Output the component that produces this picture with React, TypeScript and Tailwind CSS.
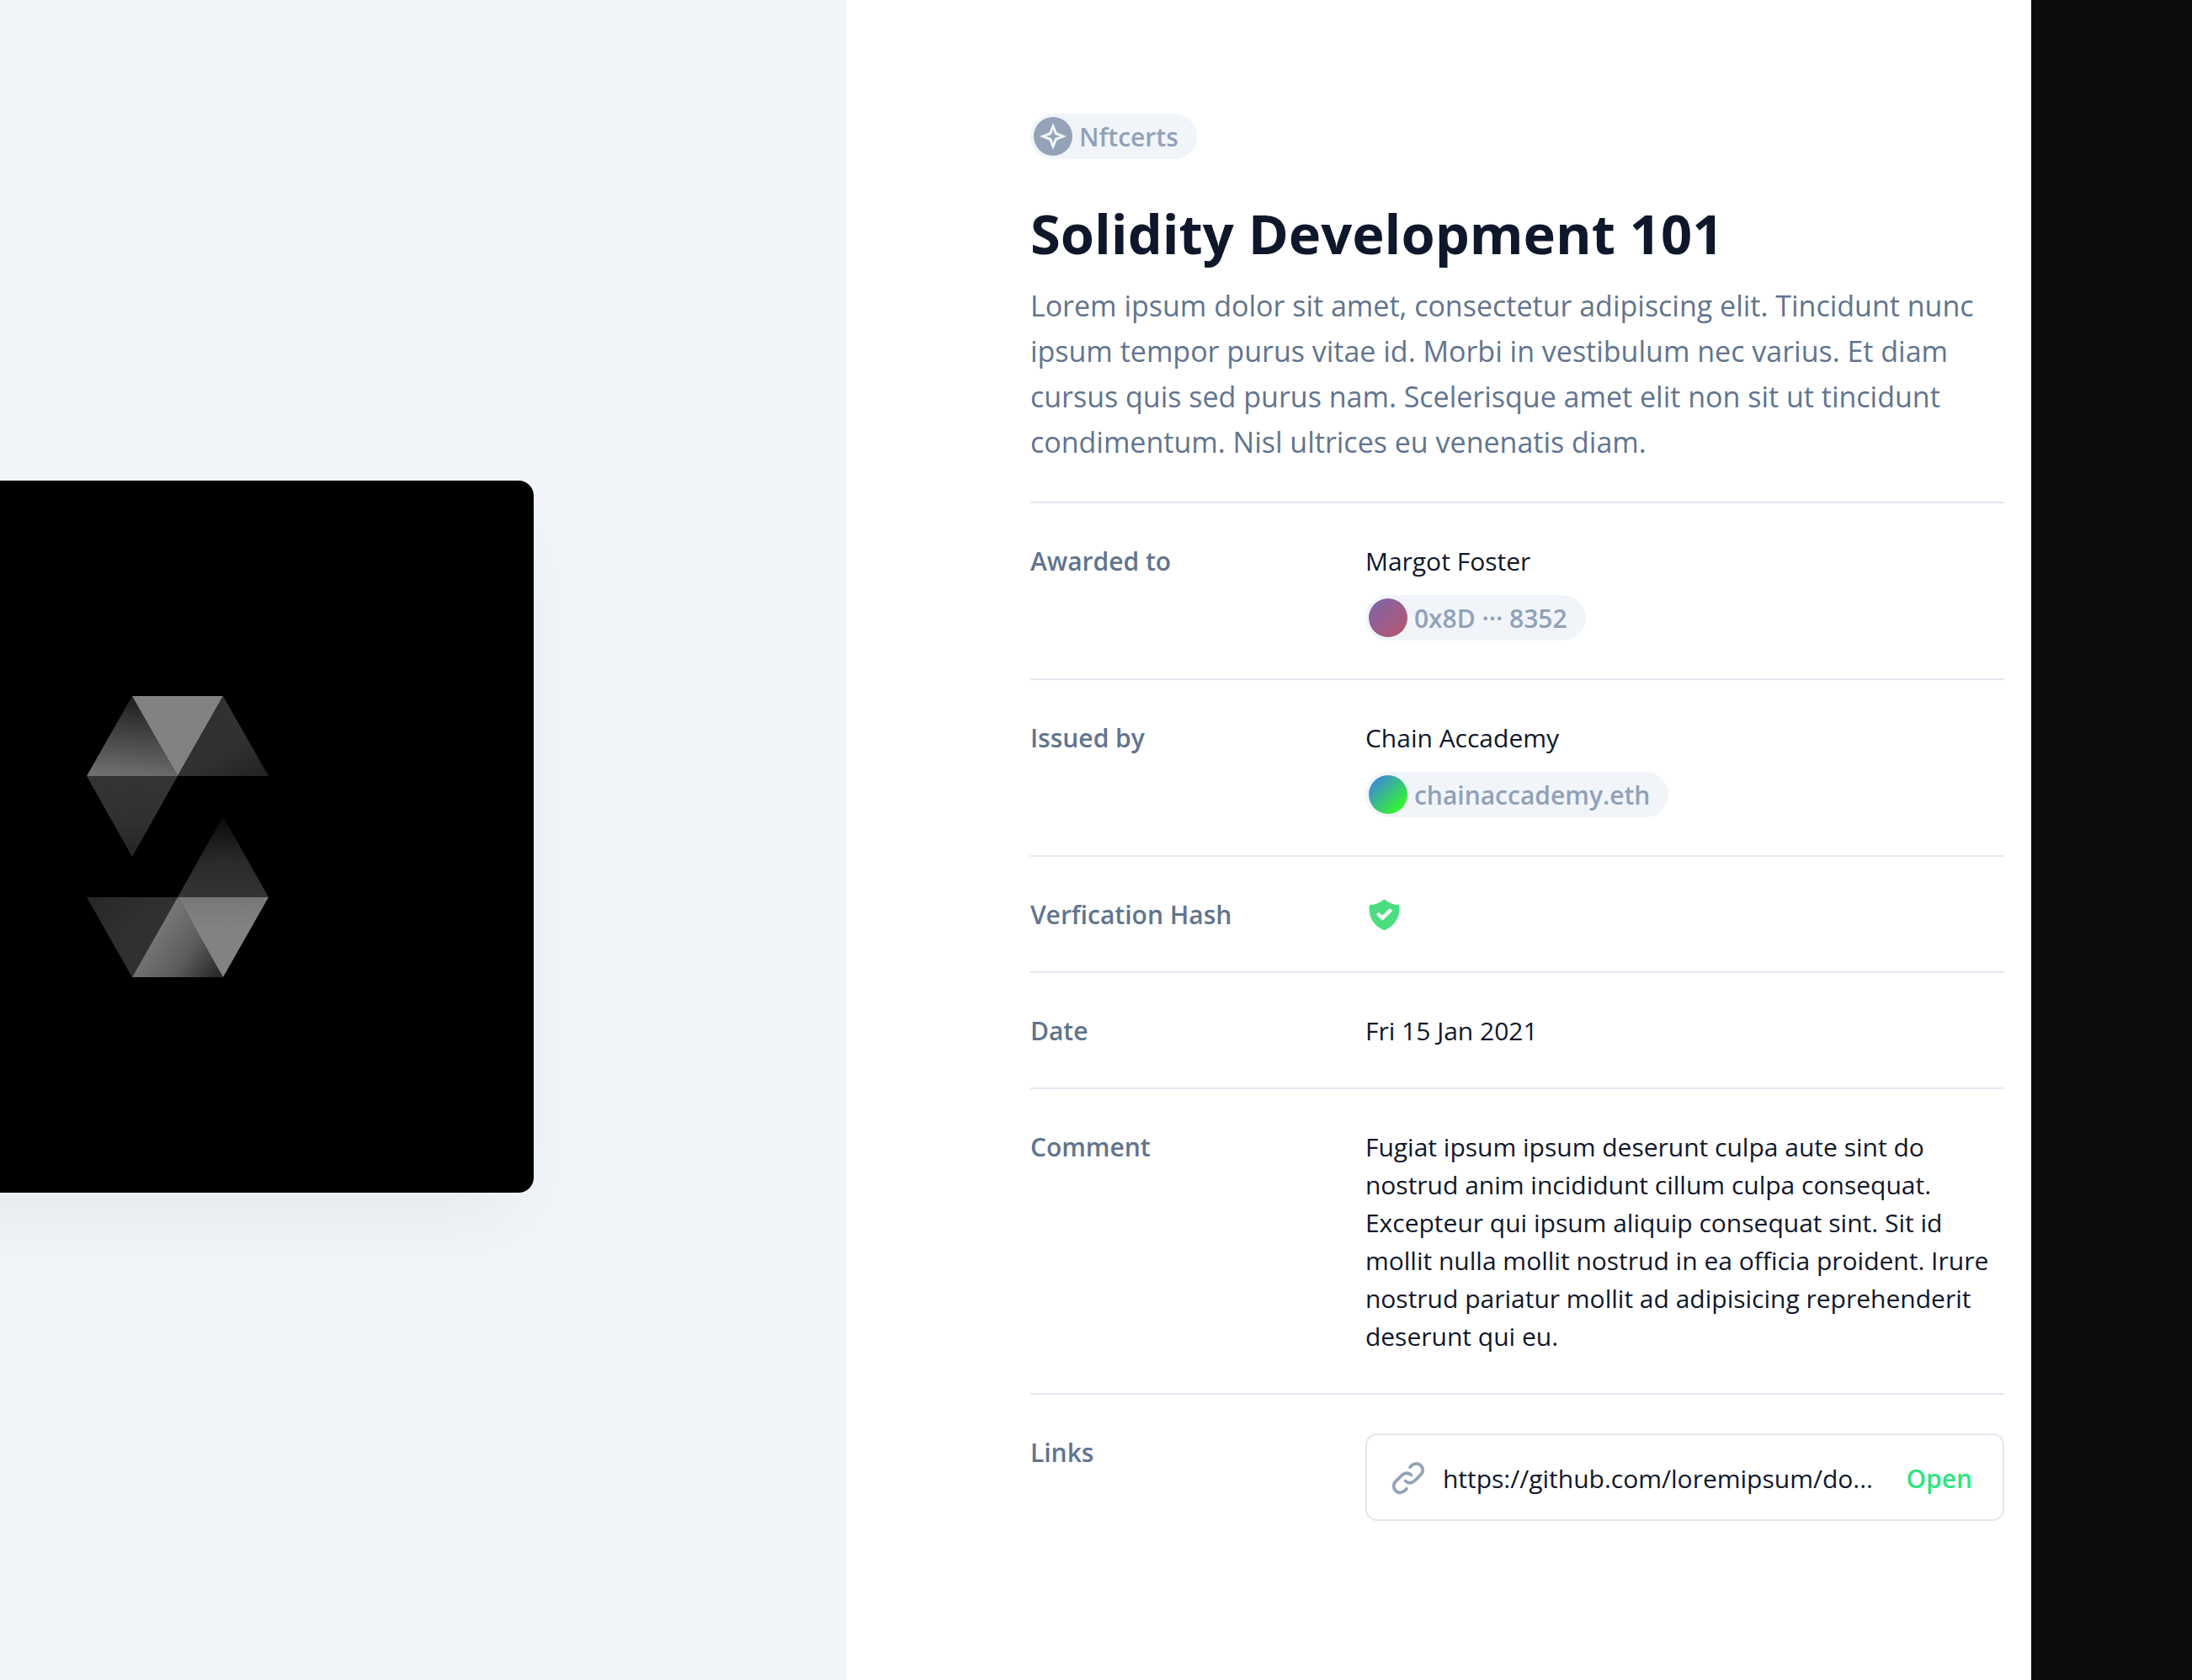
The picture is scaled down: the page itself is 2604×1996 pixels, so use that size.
import type { ReactNode } from "react";

function SolidityLogo() {
  return (
    <svg viewBox="0 0 216 334" className="w-[216px]" aria-label="Solidity" role="img">
      <defs>
        <linearGradient id="a" x1="0.5" y1="0" x2="0.4" y2="1">
          <stop offset="0" stopColor="#1c1c1c" />
          <stop offset="1" stopColor="#6f6f6f" />
        </linearGradient>
        <linearGradient id="b" x1="0.2" y1="0" x2="0.9" y2="1">
          <stop offset="0.6" stopColor="#313131" />
          <stop offset="1" stopColor="#232323" />
        </linearGradient>
        <linearGradient id="c" x1="0.5" y1="0" x2="0.5" y2="1">
          <stop offset="0" stopColor="#343434" />
          <stop offset="0.6" stopColor="#303030" />
          <stop offset="1" stopColor="#242424" />
        </linearGradient>
        <linearGradient id="d" x1="0.5" y1="0" x2="0.5" y2="1">
          <stop offset="0" stopColor="#080808" />
          <stop offset="0.55" stopColor="#2a2a2a" />
          <stop offset="1" stopColor="#343434" />
        </linearGradient>
        <linearGradient id="e" x1="0" y1="0" x2="0.5" y2="0.4">
          <stop offset="0" stopColor="#272727" />
          <stop offset="1" stopColor="#303030" />
        </linearGradient>
        <linearGradient id="f" x1="0.25" y1="0.5" x2="0.95" y2="0.95">
          <stop offset="0" stopColor="#757575" />
          <stop offset="0.5" stopColor="#5c5c5c" />
          <stop offset="1" stopColor="#292929" />
        </linearGradient>
        <linearGradient id="g" x1="0.5" y1="0" x2="0.5" y2="1">
          <stop offset="0" stopColor="#787878" />
          <stop offset="0.4" stopColor="#828282" />
          <stop offset="1" stopColor="#828282" />
        </linearGradient>
      </defs>
      <path d="M54 0L108 95H0Z" fill="url(#a)" />
      <path d="M54 0H162L108 95Z" fill="#828282" />
      <path d="M162 0L216 95H108Z" fill="url(#b)" />
      <path d="M0 95H108L54 191Z" fill="url(#c)" />
      <path d="M162 143L216 239H108Z" fill="url(#d)" />
      <path d="M0 239H108L54 334Z" fill="url(#e)" />
      <path d="M108 239L162 334H54Z" fill="url(#f)" />
      <path d="M108 239H216L162 334Z" fill="url(#g)" />
    </svg>
  );
}

function Pill({ icon, children }: { icon: ReactNode; children: ReactNode }) {
  return (
    <span className="flex h-[54px] w-fit items-center gap-2 rounded-full bg-slate-100 pr-[22px] pl-1 text-[30px] leading-[45px] font-semibold text-slate-400">
      {icon}
      <span className="pt-px">{children}</span>
    </span>
  );
}

function Row({ label, children }: { label: string; children: ReactNode }) {
  return (
    <div className="flex border-t-2 border-slate-200 pt-[46px] pb-[45px]">
      <dt className="w-[398px] shrink-0 font-semibold text-slate-500">{label}</dt>
      <dd className="min-w-0 flex-1 text-slate-900">{children}</dd>
    </div>
  );
}

export default function App() {
  return (
    <main className="flex min-h-screen bg-white font-['Open_Sans',sans-serif]">
      <section className="flex w-[38.63%] shrink-0 items-center overflow-hidden bg-slate-100 pb-2">
        <div className="-ml-[212px] flex aspect-square w-[846px] shrink-0 items-center justify-center rounded-[18px] bg-black shadow-[0_45px_90px_-20px_rgba(0,0,0,0.05)]">
          <SolidityLogo />
        </div>
      </section>
      <section className="min-w-0 flex-1 pt-[135px] pr-8 pb-[135px] pl-[218px]">
        <Pill
          icon={
            <svg viewBox="0 0 46 46" className="size-[46px]" aria-hidden="true">
              <circle cx="23" cy="23" r="23" fill="#94a3b8" />
              <path
                d="M23 7L27 17Q27.500 18.500 29 19L39 23L29 27Q27.500 27.500 27 29L23 39L19 29Q18.500 27.500 17 27L7 23L17 19Q18.500 18.500 19 17ZM23 14.500L21.500 19.500Q21 21 19.500 21.500L14.500 23L19.500 24.500Q21 25 21.500 26.500L23 31.500L24.500 26.500Q25 25 26.500 24.500L31.500 23L26.500 21.500Q25 21 24.500 19.500Z"
                fill="#f1f5f9"
                fillRule="evenodd"
              />
            </svg>
          }
        >
          Nftcerts
        </Pill>
        <h1 className="mt-[48px] text-[65px] leading-[81px] font-bold text-slate-900">
          Solidity Development 101
        </h1>
        <p className="mt-[18px] mb-[44px] text-[34px] leading-[54px] text-slate-500">
          Lorem ipsum dolor sit amet, consectetur adipiscing elit. Tincidunt nunc ipsum tempor purus
          vitae id. Morbi in vestibulum nec varius. Et diam cursus quis sed purus nam. Scelerisque
          amet elit non sit ut tincidunt condimentum. Nisl ultrices eu venenatis diam.
        </p>
        <dl className="text-[30px] leading-[45px]">
          <Row label="Awarded to">
            <p className="mb-[18px]">Margot Foster</p>
            <Pill
              icon={
                <span className="size-[46px] rounded-full bg-[linear-gradient(135deg,#7b66ad,#b8566a)]" />
              }
            >
              0x8D ··· 8352
            </Pill>
          </Row>
          <Row label="Issued by">
            <p className="mb-[18px]">Chain Accademy</p>
            <Pill
              icon={
                <span className="size-[46px] rounded-full bg-[linear-gradient(135deg,#3f76f5,#33ff22_90%)]" />
              }
            >
              chainaccademy.eth
            </Pill>
          </Row>
          <Row label="Verfication Hash">
            <svg viewBox="0 0 20 20" className="size-[45px]" role="img" aria-label="Verified">
              <path
                fill="#4ade80"
                fillRule="evenodd"
                d="M2.166 4.999A11.954 11.954 0 0010 1.944 11.954 11.954 0 0017.834 5c.11.65.166 1.32.166 2.001 0 5.225-3.34 9.67-8 11.317C5.34 16.67 2 12.225 2 7c0-.682.057-1.35.166-2.001zm11.541 3.708a1 1 0 00-1.414-1.414L9 10.586 7.707 9.293a1 1 0 00-1.414 1.414l2 2a1 1 0 001.414 0l4-4z"
              />
            </svg>
          </Row>
          <Row label="Date">Fri 15 Jan 2021</Row>
          <Row label="Comment">
            Fugiat ipsum ipsum deserunt culpa aute sint do nostrud anim incididunt cillum culpa
            consequat. Excepteur qui ipsum aliquip consequat sint. Sit id mollit nulla mollit
            nostrud in ea officia proident. Irure nostrud pariatur mollit ad adipisicing
            reprehenderit deserunt qui eu.
          </Row>
          <Row label="Links">
            <div className="flex h-[104px] items-center rounded-[14px] border-2 border-slate-200 pt-0.5 pr-[36px] pl-[26px]">
              <svg
                viewBox="0 0 24 24"
                className="size-[46px] shrink-0"
                fill="none"
                stroke="#94a3b8"
                strokeWidth="2"
                strokeLinecap="round"
                strokeLinejoin="round"
                aria-hidden="true"
              >
                <path d="M13.828 10.172a4 4 0 00-5.656 0l-4 4a4 4 0 105.656 5.656l1.102-1.101m-.758-4.899a4 4 0 005.656 0l4-4a4 4 0 00-5.656-5.656l-1.1 1.1" />
              </svg>
              <span className="ml-[18px] min-w-0 flex-1 whitespace-nowrap">
                https://github.com/loremipsum/do...
              </span>
              <a
                href="https://github.com/loremipsum"
                className="shrink-0 font-semibold text-[#2ee57f]"
              >
                Open
              </a>
            </div>
          </Row>
        </dl>
      </section>
      <aside className="w-[7.33%] shrink-0 bg-[#0d0d0d]" />
    </main>
  );
}
